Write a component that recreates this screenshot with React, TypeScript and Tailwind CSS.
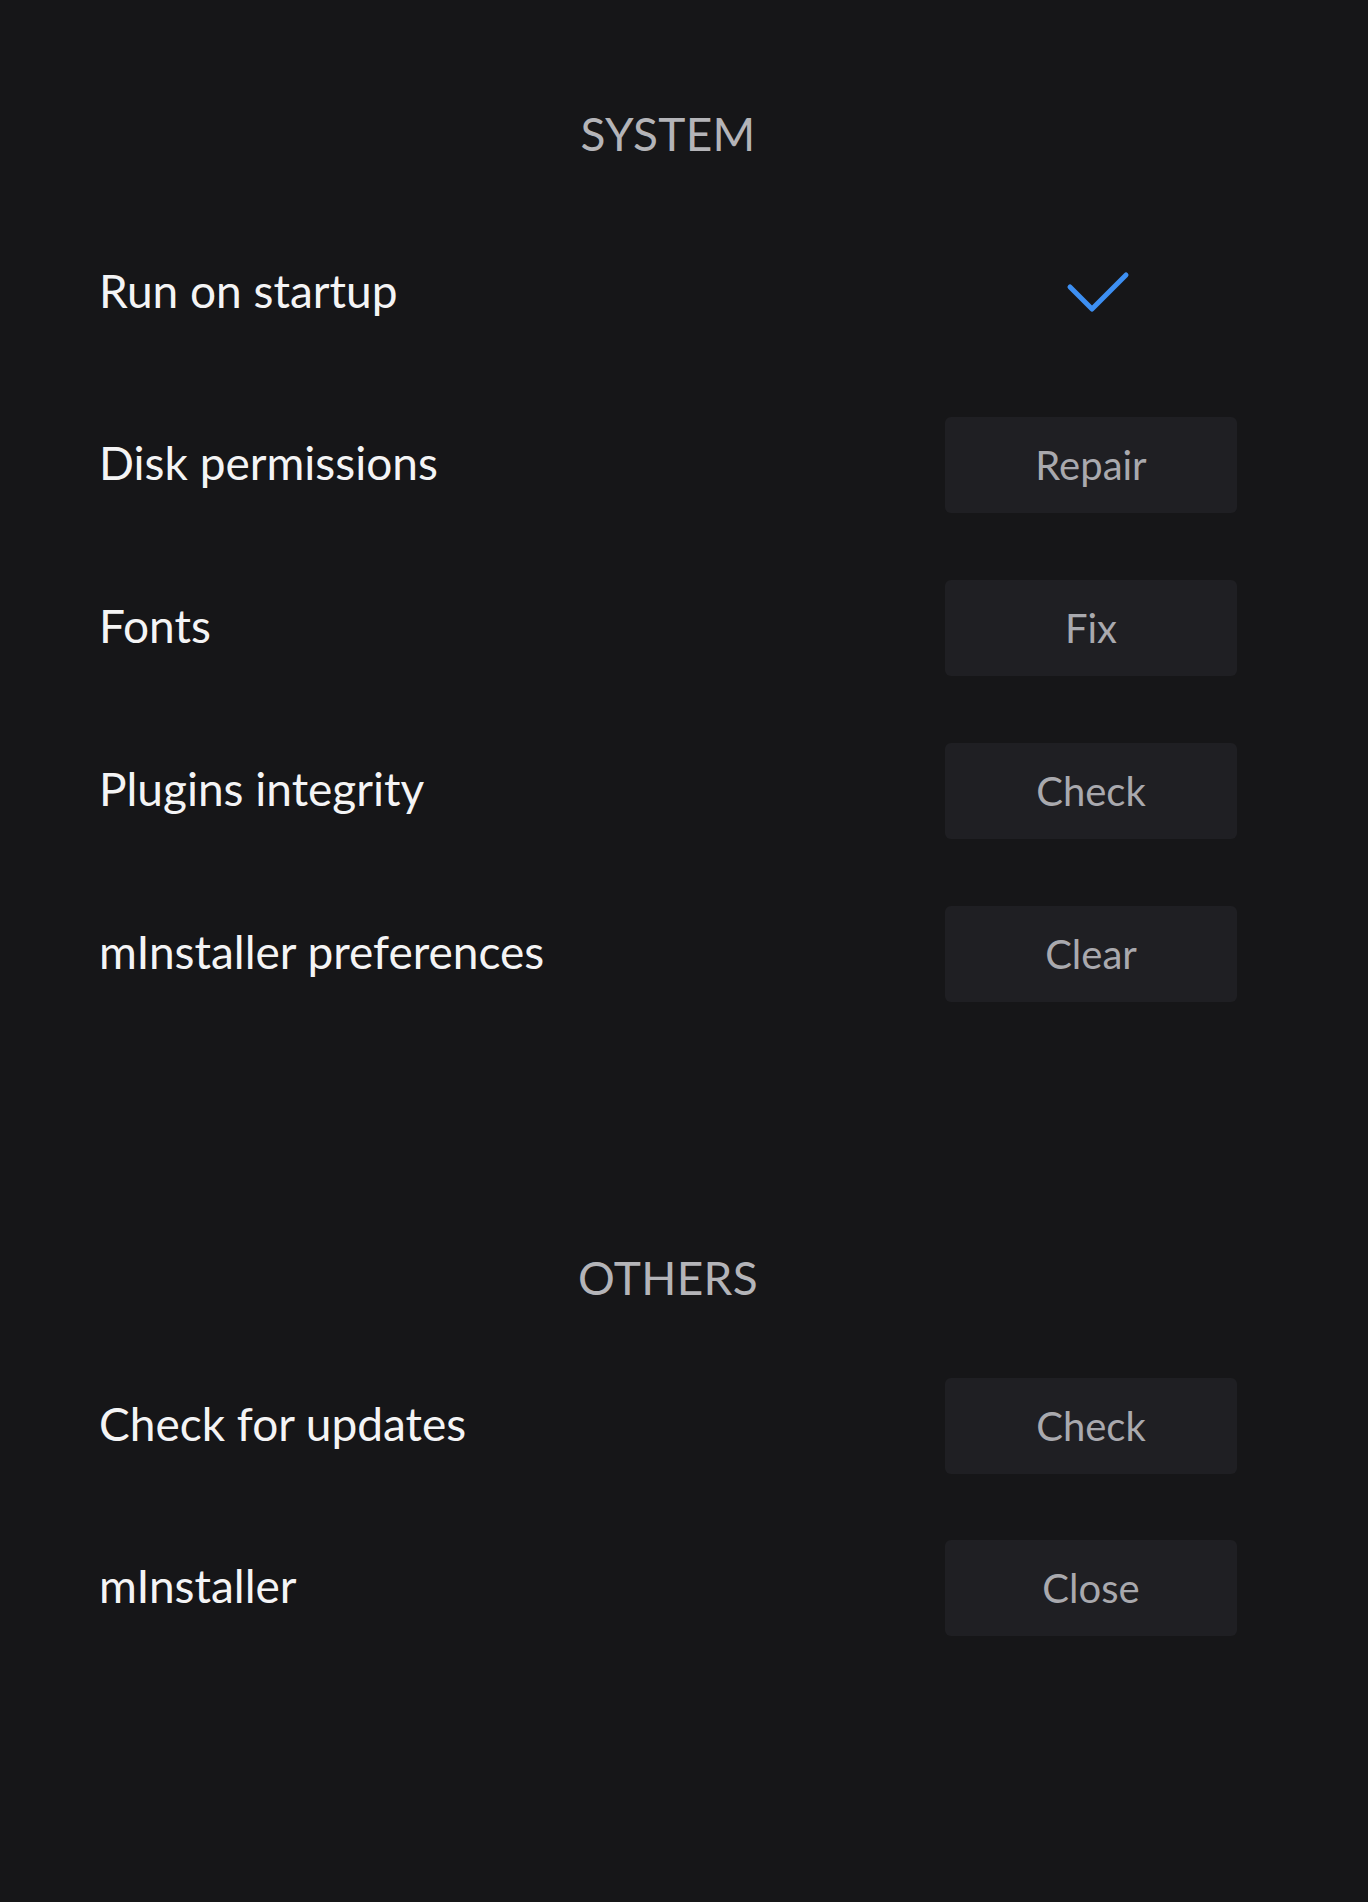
import React from 'react';

const Row = ({ label, action, checked }: { label: string; action?: string; checked?: boolean }) => (
  <div className="flex items-center justify-between h-[96px]">
    <span className="text-[46px] leading-none text-[#f4f4f5]">{label}</span>
    {checked ? (
      <div className="w-[292px] flex justify-center">
        <svg width="66" height="46" viewBox="0 0 66 46" fill="none" className="ml-[14px] mt-[4px]">
          <path d="M5 17 L27 39 L61 5" stroke="#3d8ff2" strokeWidth="5" strokeLinecap="round" strokeLinejoin="round" />
        </svg>
      </div>
    ) : (
      <button className="w-[292px] h-[96px] mt-[3px] rounded-[6px] bg-[#1f1f23] text-[40px] text-[#a9a9ae]">
        {action}
      </button>
    )}
  </div>
);

const App = () => {
  return (
    <div
      className="min-h-screen w-[1368px] bg-[#161618] pl-[99px] pr-[131px] pt-[109px] pb-[268px]"
      style={{ fontFamily: 'Lato, "Open Sans", sans-serif' }}
    >
      <h2 className="h-[48px] flex items-center justify-center text-[46px] text-[#b4b4b8] tracking-[0.3px]">
        SYSTEM
      </h2>
      <div className="mt-[86px] flex flex-col gap-[67px]">
        <div className="mb-[9px]">
          <Row label="Run on startup" checked />
        </div>
        <Row label="Disk permissions" action="Repair" />
        <Row label="Fonts" action="Fix" />
        <Row label="Plugins integrity" action="Check" />
        <Row label="mInstaller preferences" action="Clear" />
      </div>

      <h2 className="mt-[253px] h-[48px] flex items-center justify-center text-[46px] text-[#b4b4b8] tracking-[0.3px]">
        OTHERS
      </h2>
      <div className="mt-[75px] flex flex-col gap-[66px]">
        <Row label="Check for updates" action="Check" />
        <Row label="mInstaller" action="Close" />
      </div>
    </div>
  );
};

export default App;
